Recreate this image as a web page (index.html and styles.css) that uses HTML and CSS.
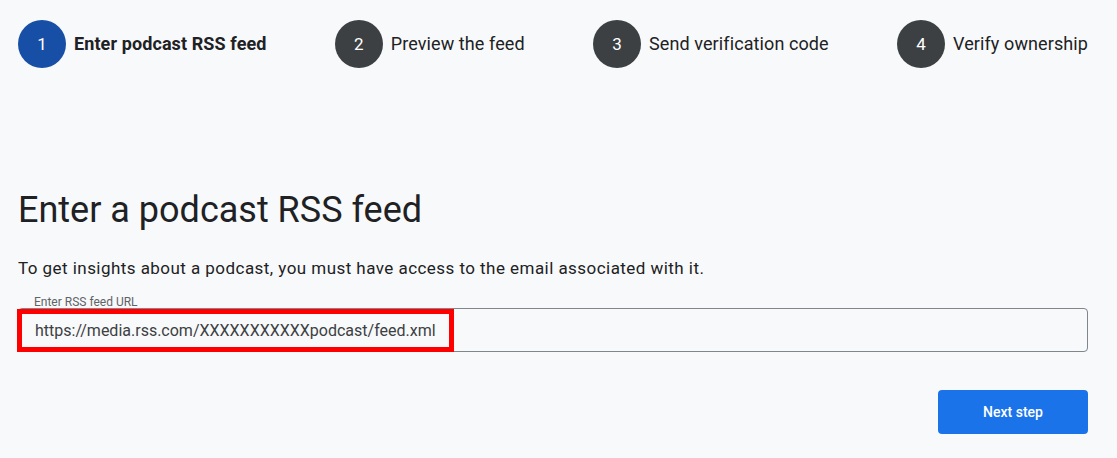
FILE: index.html
```html
<!DOCTYPE html>
<html lang="en">
<head>
<meta charset="utf-8">
<title>Enter a podcast RSS feed</title>
<link rel="stylesheet" href="styles.css">
</head>
<body>
<div class="page">
  <ol class="stepper">
    <li class="step step-active"><span class="step-num">1</span><span class="step-label">Enter podcast RSS feed</span></li>
    <li class="step"><span class="step-num">2</span><span class="step-label">Preview the feed</span></li>
    <li class="step"><span class="step-num">3</span><span class="step-label">Send verification code</span></li>
    <li class="step"><span class="step-num">4</span><span class="step-label">Verify ownership</span></li>
  </ol>

  <h1 class="title">Enter a podcast RSS feed</h1>
  <p class="intro">To get insights about a podcast, you must have access to the email associated with it.</p>

  <div class="field">
    <label class="field-label" for="rss">Enter RSS feed URL</label>
    <div class="field-box">
      <input id="rss" class="field-input" type="text" value="https://media.rss.com/XXXXXXXXXXXpodcast/feed.xml">
      <span class="highlight"></span>
    </div>
  </div>

  <div class="actions">
    <button class="btn-primary" type="button">Next step</button>
  </div>
</div>
</body>
</html>
```

FILE: styles.css
```css
html, body {
  margin: 0;
  padding: 0;
  background: #f8f9fa;
}

body {
  font-family: Roboto, "Liberation Sans", Arial, sans-serif;
  color: #202124;
}

.page {
  padding: 20px 29px 0 18px;
}

.stepper {
  list-style: none;
  margin: 0;
  padding: 0;
  display: flex;
  justify-content: space-between;
  align-items: center;
}

.step {
  display: flex;
  align-items: center;
  gap: 8px;
}

.step-num {
  width: 48px;
  height: 48px;
  border-radius: 50%;
  background: #3c4043;
  color: #ffffff;
  display: flex;
  align-items: center;
  justify-content: center;
  font-size: 17px;
}

.step-active .step-num {
  background: #174ea6;
}

.step-label {
  font-size: 18px;
  letter-spacing: 0.1px;
  color: #202124;
  line-height: 24px;
}

.step-active .step-label {
  font-weight: 700;
}

.title {
  margin: 120px 0 0;
  font-size: 36px;
  line-height: 44px;
  font-weight: 400;
  color: #202124;
}

.intro {
  margin: 24px 0 0;
  font-size: 17px;
  letter-spacing: 0.45px;
  line-height: 24px;
  color: #202124;
}

.field {
  margin-top: 16px;
  display: flex;
  flex-direction: column;
}

.field-label {
  font-size: 12px;
  line-height: 12px;
  color: #5f6368;
  padding-left: 16px;
  margin-bottom: 0;
}

.field-box {
  position: relative;
}

.field-input {
  display: block;
  box-sizing: border-box;
  width: 100%;
  height: 44px;
  margin: 0;
  padding: 0 16px;
  border: 1px solid #80868b;
  border-radius: 4px;
  background: transparent;
  font-family: Roboto, "Liberation Sans", Arial, sans-serif;
  font-size: 16px;
  color: #3c4043;
  outline: none;
}

.highlight {
  position: absolute;
  left: -1px;
  top: 1px;
  width: 437px;
  height: 43px;
  box-sizing: border-box;
  border: 5px solid #ff0000;
  pointer-events: none;
}

.actions {
  display: flex;
  justify-content: flex-end;
  margin-top: 38px;
}

.btn-primary {
  width: 150px;
  height: 44px;
  border: none;
  border-radius: 4px;
  background: #1a73e8;
  color: #ffffff;
  font-family: Roboto, "Liberation Sans", Arial, sans-serif;
  font-size: 14px;
  font-weight: 500;
  cursor: pointer;
}
```
